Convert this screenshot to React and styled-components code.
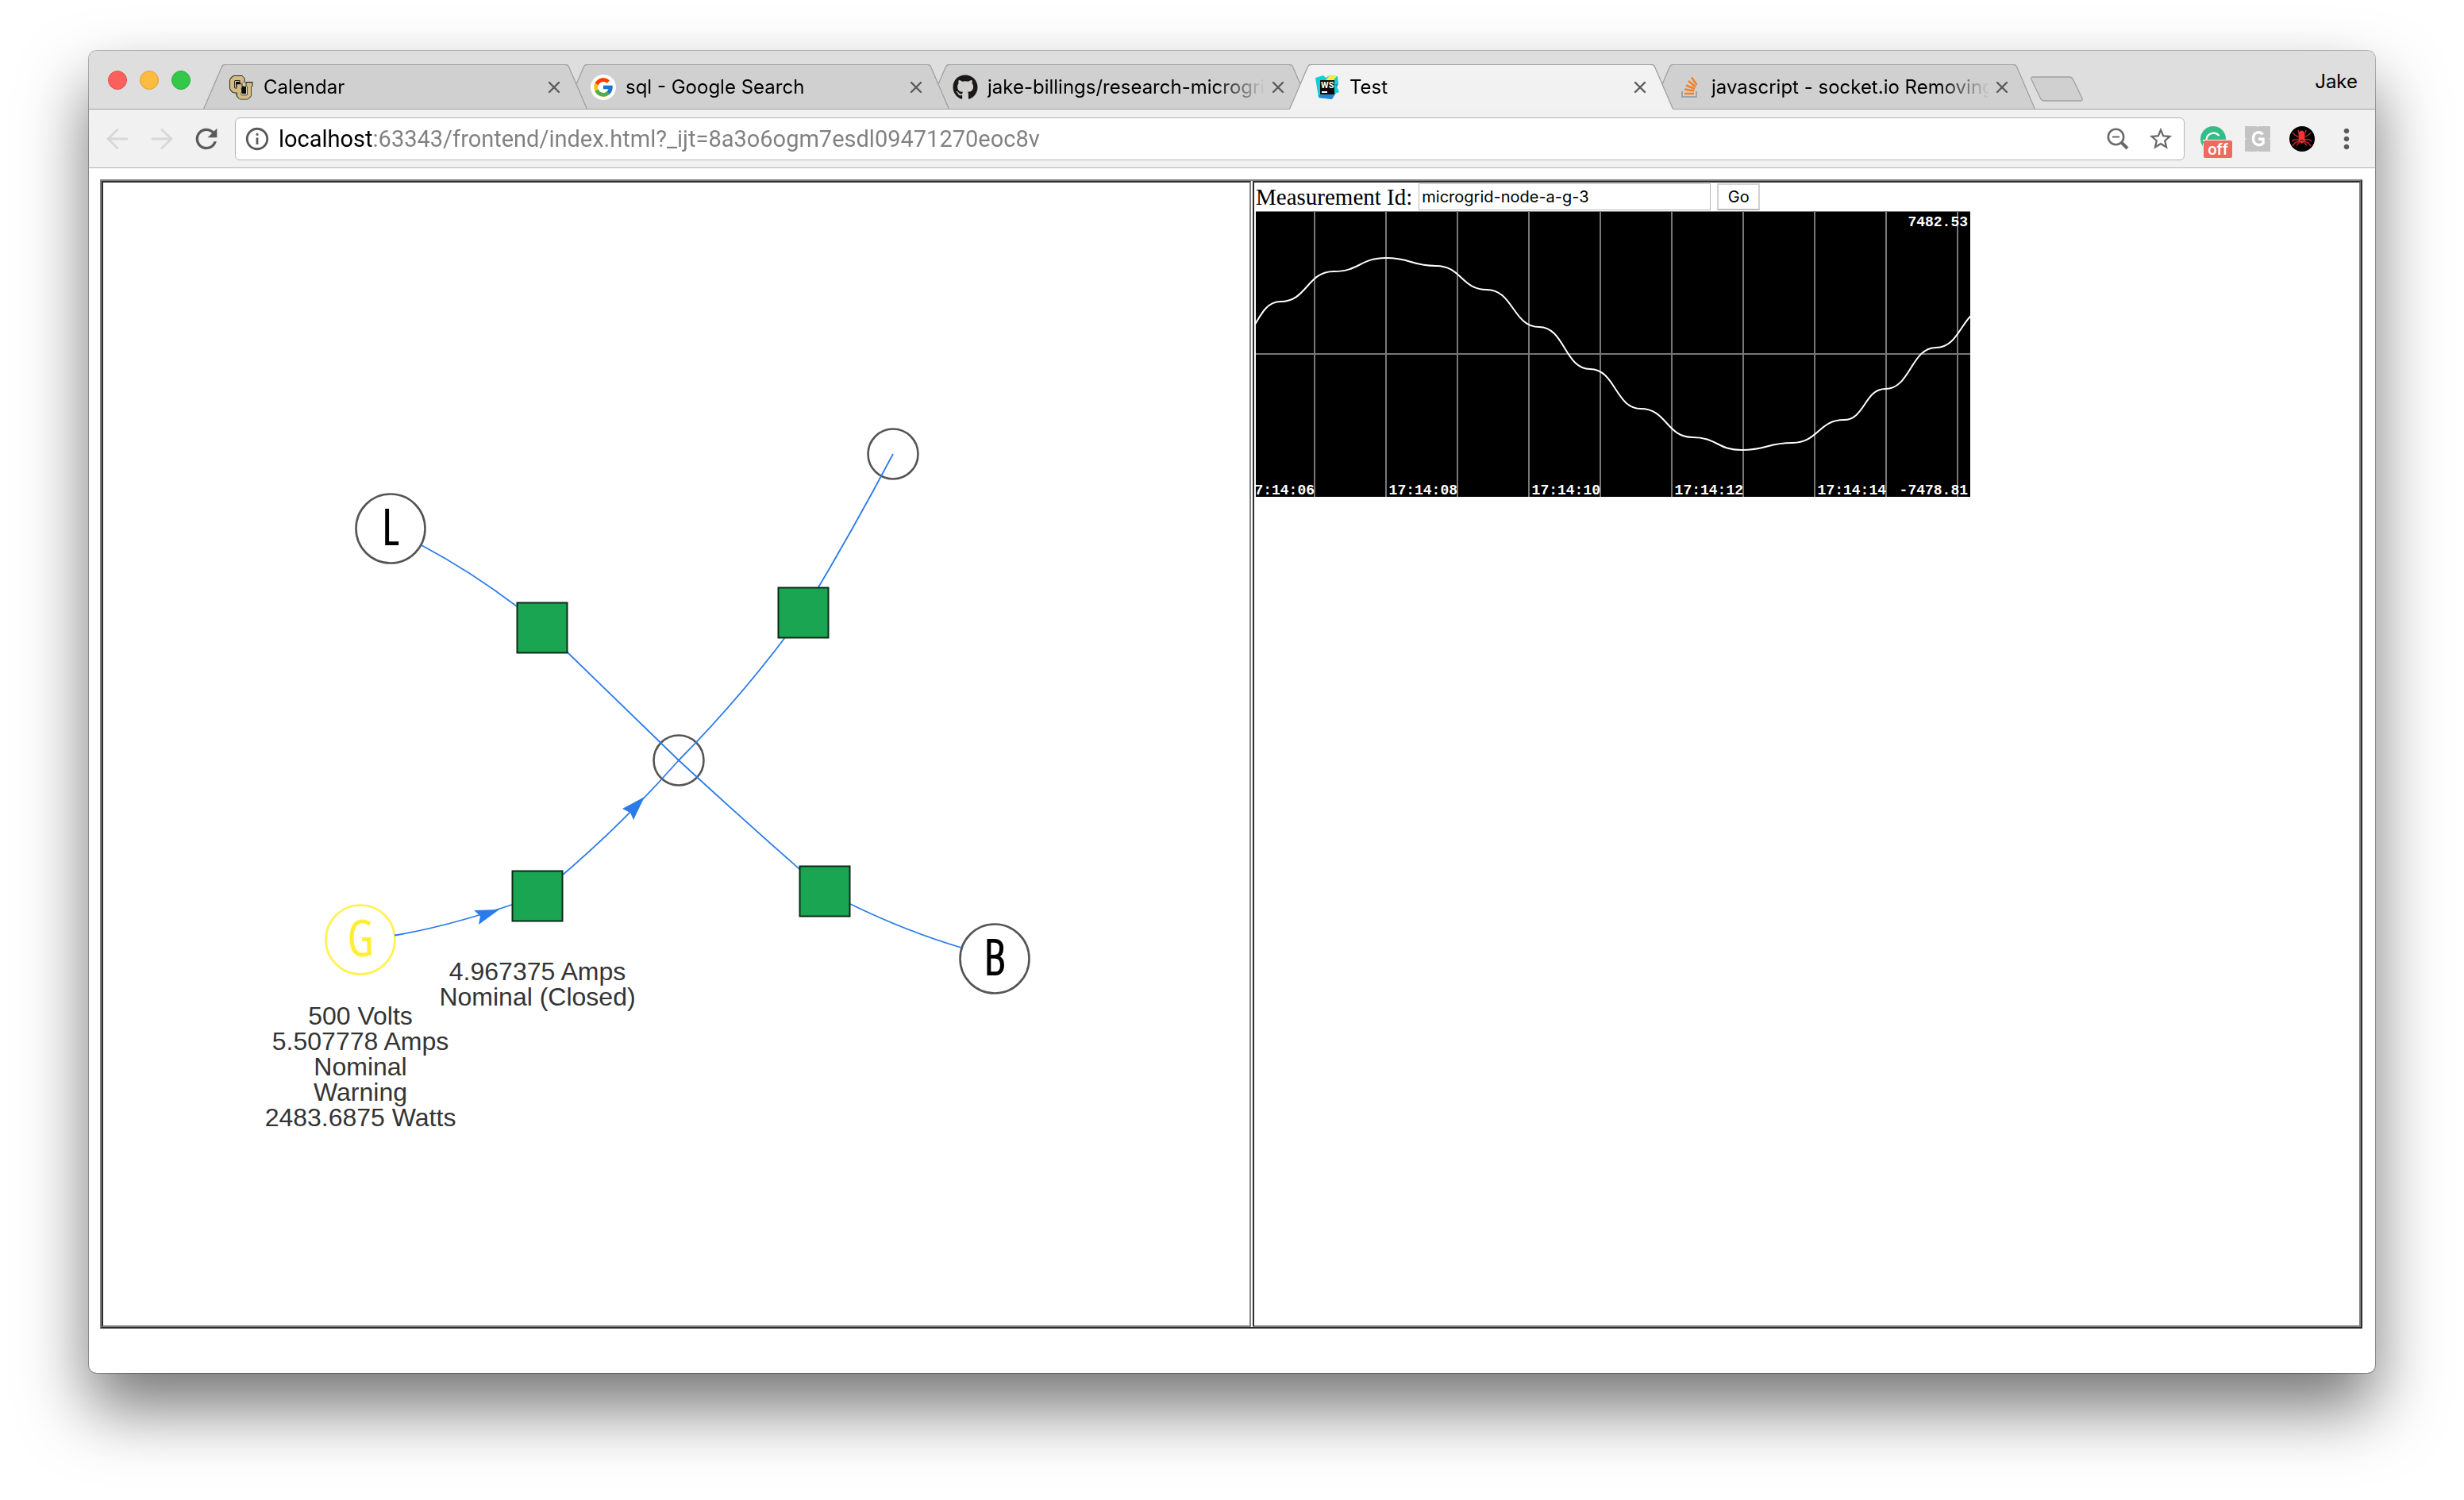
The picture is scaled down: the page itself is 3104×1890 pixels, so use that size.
import React from "react";
import styled, { createGlobalStyle, css } from "styled-components";
import { FcGoogle } from "react-icons/fc";
import { FaGithub } from "react-icons/fa";
import { MdRefresh, MdInfoOutline, MdStarBorder, MdMoreVert } from "react-icons/md";

const ui = `Inter, Roboto, "Liberation Sans", sans-serif`;
const line = "#a0a0a0";

const GlobalStyle = createGlobalStyle`
  *, *::before, *::after { box-sizing: border-box; }
  body { margin: 0; background: #fff; }
  button, input { font: inherit; }
`;

const Desktop = styled.div`
  padding: 64px 112px 160px;
`;

const Window = styled.div`
  border-radius: 10px;
  overflow: hidden;
  background: #fff;
  box-shadow: 0 0 0 1px rgba(0, 0, 0, 0.28), 0 44px 84px rgba(0, 0, 0, 0.54);
`;

const Header = styled.header`
  display: flex;
  align-items: flex-end;
  height: 74px;
  padding: 0 22px 0 24px;
  border-bottom: 1px solid ${line};
  background: #dedede;
  font-family: ${ui};
  font-size: 24px;
  color: #000;
`;

const Lights = styled.div`
  display: flex;
  align-self: center;
  gap: 16px;
  margin-right: 16px;
`;

const Light = styled.button`
  width: 24px;
  height: 24px;
  padding: 0;
  border: 1px solid ${(p) => p.$edge};
  border-radius: 50%;
  background: ${(p) => p.$fill};
`;

const TabList = styled.div`
  display: flex;
  flex: 1;
  align-items: flex-end;
  min-width: 0;
  margin-bottom: -1px;
`;

const Tab = styled.div`
  position: relative;
  z-index: ${(p) => p.$level};
  display: flex;
  flex: 0 1 484px;
  min-width: 0;
  height: 57px;
  & + & {
    margin-left: -28px;
  }
`;

const Slope = styled.svg`
  display: block;
  flex: none;
  width: 28px;
  height: 57px;
  ${(p) =>
    p.$mirror &&
    css`
      transform: scaleX(-1);
    `}
`;

const TabBody = styled.div`
  display: flex;
  flex: 1;
  align-items: center;
  min-width: 0;
  padding: 0 2px 0 4px;
  border-top: 1px solid ${line};
  border-bottom: 1px solid ${(p) => (p.$active ? "#f2f2f2" : line)};
  background: ${(p) => (p.$active ? "#f2f2f2" : "#d0d0d0")};
`;

const TabTitle = styled.button`
  display: flex;
  flex: 1;
  align-items: center;
  gap: 12px;
  min-width: 0;
  margin-right: 4px;
  padding: 0;
  border: 0;
  background: none;
  color: inherit;
  text-align: left;
  svg {
    flex: none;
  }
`;

const TitleText = styled.span`
  flex: 1;
  overflow: hidden;
  white-space: nowrap;
  line-height: 32px;
  mask-image: linear-gradient(90deg, #000 calc(100% - 64px), transparent);
`;

const IconButton = styled.button`
  display: flex;
  flex: none;
  align-items: center;
  justify-content: center;
  width: ${(p) => p.$size}px;
  height: ${(p) => p.$size}px;
  padding: 0;
  border: 0;
  background: none;
  color: ${(p) => p.$color || "#5a5a5a"};
`;

const NewTab = styled.button`
  flex: none;
  height: 32px;
  margin: 0 0 10px -7px;
  padding: 0;
  border: 0;
  background: none;
  svg {
    display: block;
  }
`;

const Profile = styled.button`
  align-self: center;
  padding: 4px 0 0;
  border: 0;
  background: none;
  color: #000;
`;

const Toolbar = styled.div`
  display: flex;
  align-items: center;
  gap: 16px;
  height: 74px;
  padding: 0 16px;
  border-bottom: 1px solid #b4b4b4;
  background: #f1f1f1;
`;

const Omnibox = styled.div`
  display: flex;
  flex: 1;
  align-items: center;
  gap: 10px;
  height: 54px;
  padding: 0 12px 0 10px;
  border: 1px solid #b4b4b4;
  border-radius: 6px;
  background: #fff;
`;

const Address = styled.input`
  flex: 1;
  min-width: 0;
  height: 40px;
  padding: 0;
  border: 0;
  outline: 0;
  background: linear-gradient(90deg, #000 120px, #808080 120px);
  background-clip: text;
  -webkit-text-fill-color: transparent;
  font-family: Roboto, "Liberation Sans", sans-serif;
  font-size: 29px;
`;

const OmniActions = styled.div`
  display: flex;
  gap: 20px;
`;

const Extensions = styled.div`
  display: flex;
  gap: 24px;
  padding: 0 4px;
`;

const Extension = styled.button`
  position: relative;
  width: 32px;
  height: 32px;
  padding: 0;
  border: 0;
  background: none;
  svg {
    display: block;
  }
`;

const Badge = styled.span`
  position: absolute;
  left: 4px;
  top: 18px;
  width: 36px;
  height: 22px;
  border-radius: 2px;
  background: #ee6a5f;
  color: #fff;
  font: 500 20px/22px Roboto, "Liberation Sans", sans-serif;
  text-align: center;
`;

const Page = styled.main`
  padding: 14px 16px 56px 14px;
`;

const Frame = styled.div`
  display: grid;
  grid-template-columns: 1448fr 1396fr;
  gap: 2px;
  border: 2px solid;
  border-color: #808080 #2c2c2c #2c2c2c #808080;
`;

const Pane = styled.section`
  min-width: 0;
  padding: 0 ${(p) => p.$pad || 0}px;
  border: 2px solid;
  border-color: #2c2c2c #808080 #808080 #2c2c2c;
`;

const Diagram = styled.svg`
  display: block;
  width: 100%;
  height: auto;
`;

const NodeLabel = styled.text`
  fill: #343434;
  font-family: "Liberation Sans", Arial, sans-serif;
  font-size: 32px;
  text-anchor: middle;
`;

const NodeLetter = styled.text`
  fill: ${(p) => p.$color};
  stroke: ${(p) => p.$color};
  stroke-width: 2px;
  font-family: "Open Sans Condensed Light", "Open Sans Condensed", "DejaVu Sans Mono", monospace;
  font-size: 60px;
  font-weight: 300;
  text-anchor: middle;
`;

const QueryForm = styled.form`
  display: flex;
  align-items: center;
  gap: 8px;
  height: 36px;
  color: #000;
  font-family: "Liberation Serif", "Times New Roman", serif;
  font-size: 29px;
`;

const MeasurementInput = styled.input`
  width: 368px;
  height: 34px;
  padding: 0 3px;
  border: 1px solid #b8b8b8;
  border-radius: 0;
  background: #fff;
  color: #000;
  font-family: ${ui};
  font-size: 20px;
`;

const GoButton = styled.button`
  width: 54px;
  height: 34px;
  padding: 0;
  border: 2px solid #d2d2d2;
  border-bottom-color: #bababa;
  background: #fff;
  color: #000;
  font-family: ${ui};
  font-size: 20px;
  line-height: 30px;
`;

const Chart = styled.svg`
  display: block;
  width: 900px;
  max-width: 100%;
  height: auto;
  overflow: visible;
  background: #000;
`;

const ChartText = styled.text`
  fill: #fff;
  font-family: "Liberation Mono", "Courier New", monospace;
  font-size: 18px;
  font-weight: 700;
  text-anchor: end;
`;

const BuffaloIcon = () => (
  <svg width="32" height="32" viewBox="0 0 32 32" aria-hidden="true">
    <g fill="none" strokeLinejoin="bevel">
      <path d="M17 10.500V4.500H7L4.500 7v10.500L7 20H16V14.500" stroke="#2a2418" strokeWidth="7" />
      <path d="M12.500 13.500v12.500L15 28.500h8.500L26 26V12.500M21.500 12h9M9.500 14.500h8" stroke="#2a2418" strokeWidth="6" />
      <path d="M9 9h6v6H9zM17 15h5v9h-5z" fill="#0d0b08" />
      <path d="M17 10.500V4.500H7L4.500 7v10.500L7 20H16" stroke="#d2bc83" strokeWidth="5" />
      <path d="M13 14v12l2 2.500h8.500L26 26V13M22.500 12.500h7M10.500 14.500h6" stroke="#d2bc83" strokeWidth="4.500" />
    </g>
  </svg>
);

const GoogleIcon = () => (
  <svg width="32" height="32" viewBox="0 0 32 32" aria-hidden="true">
    <circle cx="16" cy="16" r="16" fill="#fff" />
    <FcGoogle x="2" y="2" size="28" />
  </svg>
);

const GithubIcon = () => <FaGithub size={32} color="#1b1817" aria-hidden="true" />;

const WebStormIcon = () => (
  <svg width="32" height="32" viewBox="0 0 32 32" aria-hidden="true">
    <path d="M1 4L11 1l3 3 5-3 10 1 1 9-2 4 3 7-6 2-4 7-16-2z" fill="#10cfd8" />
    <path d="M5 26l22-3-5 8-16-2zM26 13l4-2-2 5z" fill="#1d87d8" />
    <path d="M14 7l5-6 9 1-4 5z" fill="#f6ec3c" />
    <rect x="7" y="7" width="18" height="18" fill="#0c0c0c" />
    <text x="8" y="17" fill="#fff" fontFamily="Roboto, sans-serif" fontWeight="700" fontSize="11">WS</text>
    <path d="M9 22h7" stroke="#fff" strokeWidth="2" />
  </svg>
);

const StackIcon = () => (
  <svg width="32" height="32" viewBox="0 0 32 32" fill="none" aria-hidden="true">
    <path d="M7 21v7h18v-7" stroke="#9aa3ac" strokeWidth="2" />
    <g stroke="#f48024" strokeWidth="2.500">
      <path d="M10 24h12M10.200 18.500l12 2M12 13.500l11 4.500M15 8l9 7.500M19 3.500l6.500 9.500" />
    </g>
  </svg>
);

const CloseIcon = () => (
  <svg width="16" height="16" viewBox="0 0 16 16" aria-hidden="true">
    <path d="M2 2l12 12M14 2L2 14" stroke="#5a5a5a" strokeWidth="2.400" strokeLinecap="round" />
  </svg>
);

const ArrowIcon = ({ d }) => (
  <svg width="28" height="28" viewBox="0 0 28 28" fill="none" stroke="#d8d8d8" strokeWidth="3" strokeLinecap="round" strokeLinejoin="round" aria-hidden="true">
    <path d={d} />
  </svg>
);

const ZoomOutIcon = () => (
  <svg width="28" height="28" viewBox="0 0 28 28" fill="none" stroke="#6a6a6a" aria-hidden="true">
    <circle cx="11.500" cy="11.500" r="9.700" strokeWidth="2.600" />
    <path d="M7 11.500h9" strokeWidth="2" />
    <path d="M18.500 18.500l7.500 7.500" strokeWidth="4" />
  </svg>
);

const GrammarIcon = () => (
  <svg width="32" height="32" viewBox="0 0 32 32" aria-hidden="true">
    <circle cx="16" cy="16" r="16" fill="#33bd87" />
    <path d="M3 22v10h29V17H8z" fill="#f1f1f1" />
    <path d="M7.500 18A9 9 0 0 1 23.500 12" fill="none" stroke="#fff" strokeWidth="2.200" />
    <path d="M3 18h29" stroke="#f1f1f1" strokeWidth="2" />
  </svg>
);

const GridIcon = () => (
  <svg width="32" height="32" viewBox="0 0 32 32" aria-hidden="true">
    <rect width="32" height="32" rx="1" fill="#c3c3c3" />
    <path d="M0 16h1.500M30.500 16H32M16 0v1M16 31v1" stroke="#f1f1f1" strokeWidth="1.500" />
    <path d="M22.500 10.500C19 5.800 10.500 7 10.500 15.500S18.500 25.500 23 21.500V16.300H17" fill="none" stroke="#fff" strokeWidth="3.400" />
  </svg>
);

const SpiderIcon = () => (
  <svg width="32" height="32" viewBox="0 0 32 32" aria-hidden="true">
    <circle cx="16" cy="16" r="16" fill="#000" />
    <g fill="none" stroke="#c42a2c" strokeWidth="1.400">
      <path d="M12 14L7 11 4 8M19 14l5-3 3-3M11 17H6l-3 2M20 17h5l3 2M12 19l-5 2-3 4M19 19l5 2 3 4M13 20l-4 4M18 20l4 4M12 9l-1-4M20 9l1-4" />
    </g>
    <ellipse cx="15.500" cy="11" rx="4" ry="5.500" fill="#f83236" />
    <path d="M12 14h7l1 4-4.500 4-4.500-4z" fill="#f83236" />
    <path d="M13 18h5" stroke="#701214" strokeWidth="1.500" />
  </svg>
);

const TABS = [
  { title: "Calendar", Icon: BuffaloIcon },
  { title: "sql - Google Search", Icon: GoogleIcon },
  { title: "jake-billings/research-microgrid", Icon: GithubIcon },
  { title: "Test", Icon: WebStormIcon, active: true },
  { title: "javascript - socket.io Removing", Icon: StackIcon },
];

const TabSlope = ({ active, mirror }) => (
  <Slope $mirror={mirror} viewBox="0 0 28 57" aria-hidden="true">
    <path d="M0 57L23.500 3Q24.500 .5 27 .5H28V57Z" fill={active ? "#f2f2f2" : "#d0d0d0"} />
    {!active && <path d="M0 56.500H28" stroke={line} />}
    <path d="M.5 56.500L23.500 3Q24.500 .5 27 .5H28" fill="none" stroke={line} strokeWidth="1.300" />
  </Slope>
);

const BrowserTab = ({ title, Icon, active, level }) => (
  <Tab $level={level}>
    <TabSlope active={active} />
    <TabBody $active={active}>
      <TabTitle type="button" role="tab" aria-selected={!!active}>
        <Icon />
        <TitleText>{title}</TitleText>
      </TabTitle>
      <IconButton type="button" $size={24} aria-label={`Close ${title}`}>
        <CloseIcon />
      </IconButton>
    </TabBody>
    <TabSlope active={active} mirror />
  </Tab>
);

const EDGES = [
  "M401 457Q463 490 521 534",
  "M553 561Q640 646 725 728",
  "M725 728Q816 812 909 893",
  "M941 909Q1013 944 1081 964",
  "M725 728Q811 641 882 542",
  "M882 542Q941 444 995 342",
  "M367 948.500Q439 937 547 899",
  "M547 899Q643 821 725 728",
];

const ARROWS = ["M499 916L467 917L475 924L473 935Z", "M682 774L654 789L664 794L668 803Z"];

const BREAKERS = [
  [553, 561],
  [882, 542],
  [547, 899],
  [909, 893],
];

const NODES = [
  { x: 725, y: 728, r: 32 },
  { x: 995, y: 342, r: 32 },
  { x: 362, y: 436, r: 44, letter: "L" },
  { x: 1123, y: 978, r: 44, letter: "B" },
  { x: 324, y: 954, r: 44, letter: "G", warn: true },
];

const LABELS = [
  { x: 324, y: 1061, lines: ["500 Volts", "5.507778 Amps", "Nominal", "Warning", "2483.6875 Watts"] },
  { x: 547, y: 1005, lines: ["4.967375 Amps", "Nominal (Closed)"] },
];

const GridDiagram = () => (
  <Diagram viewBox="0 0 1444 1440" role="img" aria-label="Microgrid network">
    {NODES.map((n) => (
      <circle key={`${n.x}-${n.y}`} cx={n.x} cy={n.y} r={n.r - 0.5} fill="none" stroke={n.warn ? "#fff250" : "#555"} strokeWidth="2.600" />
    ))}
    <g fill="none" stroke="#2b7ce9" strokeWidth="1.800">
      {EDGES.map((d) => (
        <path key={d} d={d} />
      ))}
    </g>
    {ARROWS.map((d) => (
      <path key={d} d={d} fill="#2b7ce9" />
    ))}
    {BREAKERS.map(([x, y]) => (
      <rect key={x} x={x - 31.5} y={y - 31.5} width="63" height="63" fill="#1aa553" stroke="#0c2a18" strokeWidth="2" />
    ))}
    {NODES.filter((n) => n.letter).map((n) => (
      <NodeLetter key={n.letter} x={n.x} y={n.y + 20} $color={n.warn ? "#ffee32" : "#000"}>
        {n.letter}
      </NodeLetter>
    ))}
    {LABELS.map((l) =>
      l.lines.map((t, i) => (
        <NodeLabel key={t} x={l.x} y={l.y + i * 32}>
          {t}
        </NodeLabel>
      ))
    )}
  </Diagram>
);

const SAMPLES = [
  [-31, 168], [31, 114], [98, 76], [164, 59], [227, 69], [291, 99], [357, 146], [421, 199],
  [485, 249], [550, 285], [612, 301], [676, 292], [741, 263], [793, 224], [857, 172], [921, 123],
];

const wave = SAMPLES.map(([x, y], i) => {
  if (i === 0) return `M${x} ${y}`;
  const [px, py] = SAMPLES[i - 1];
  const mid = (px + x) / 2;
  return `C${mid} ${py} ${mid} ${y} ${x} ${y}`;
}).join("");

const GRID_X = Array.from({ length: 10 }, (_, i) => 74 + i * 90);
const TIMES = ["7:14:06", "17:14:08", "17:14:10", "17:14:12", "17:14:14"];

const WaveChart = () => (
  <Chart viewBox="0 0 900 360" role="img" aria-label="Measurement over time">
    <svg width="900" height="360" overflow="hidden">
      <g stroke="#777" strokeWidth="2" fill="none">
        {GRID_X.map((x) => (
          <path key={x} d={`M${x} 0V360`} />
        ))}
        <path d="M0 180H900" />
        <path d="M0 0H900" />
      </g>
      <path d={wave} fill="none" stroke="#fff" strokeWidth="2" />
    </svg>
    <ChartText x="897" y="19">7482.53</ChartText>
    <ChartText x="897" y="357">-7478.81</ChartText>
    {TIMES.map((t, i) => (
      <ChartText key={t} x={74 + i * 180} y="357">
        {t}
      </ChartText>
    ))}
  </Chart>
);

export default function App() {
  return (
    <>
      <GlobalStyle />
      <Desktop>
        <Window>
          <Header>
            <Lights>
              <Light type="button" aria-label="Close window" $fill="#fc605c" $edge="#e0504c" />
              <Light type="button" aria-label="Minimize window" $fill="#fdbc40" $edge="#dea034" />
              <Light type="button" aria-label="Maximize window" $fill="#34c84a" $edge="#27aa35" />
            </Lights>
            <TabList role="tablist">
              {TABS.map((t, i) => (
                <BrowserTab key={t.title} {...t} level={t.active ? 10 : TABS.length - i} />
              ))}
              <NewTab type="button" aria-label="New tab">
                <svg width="68" height="32" viewBox="0 0 68 32" aria-hidden="true">
                  <path d="M4 1H50Q53 1 54.500 4L66 28Q67 31 64 31H18Q15 31 13.500 28L2 4Q1 1 4 1Z" fill="#d0d0d0" stroke={line} strokeWidth="1.300" />
                </svg>
              </NewTab>
            </TabList>
            <Profile type="button">Jake</Profile>
          </Header>
          <Toolbar>
            <IconButton type="button" $size={40} aria-label="Back">
              <ArrowIcon d="M26 14H2M14 2.500L2 14l12 11.500" />
            </IconButton>
            <IconButton type="button" $size={40} aria-label="Forward">
              <ArrowIcon d="M2 14h24M14 2.500L26 14 14 25.500" />
            </IconButton>
            <IconButton type="button" $size={40} aria-label="Reload">
              <MdRefresh size={40} />
            </IconButton>
            <Omnibox>
              <IconButton type="button" $size={34} aria-label="Site information">
                <MdInfoOutline size={34} />
              </IconButton>
              <Address aria-label="Address" defaultValue="localhost:63343/frontend/index.html?_ijt=8a3o6ogm7esdl09471270eoc8v" />
              <OmniActions>
                <IconButton type="button" $size={34} aria-label="Zoom out">
                  <ZoomOutIcon />
                </IconButton>
                <IconButton type="button" $size={34} $color="#6a6a6a" aria-label="Bookmark">
                  <MdStarBorder size={34} />
                </IconButton>
              </OmniActions>
            </Omnibox>
            <Extensions>
              <Extension type="button" aria-label="Grammar checker off">
                <GrammarIcon />
                <Badge>off</Badge>
              </Extension>
              <Extension type="button" aria-label="G extension">
                <GridIcon />
              </Extension>
              <Extension type="button" aria-label="Spider extension">
                <SpiderIcon />
              </Extension>
            </Extensions>
            <IconButton type="button" $size={40} aria-label="Menu">
              <MdMoreVert size={40} />
            </IconButton>
          </Toolbar>
          <Page>
            <Frame>
              <Pane>
                <GridDiagram />
              </Pane>
              <Pane $pad={2}>
                <QueryForm onSubmit={(e) => e.preventDefault()}>
                  <label htmlFor="measurement">Measurement Id:</label>
                  <MeasurementInput id="measurement" defaultValue="microgrid-node-a-g-3" />
                  <GoButton type="submit">Go</GoButton>
                </QueryForm>
                <WaveChart />
              </Pane>
            </Frame>
          </Page>
        </Window>
      </Desktop>
    </>
  );
}
